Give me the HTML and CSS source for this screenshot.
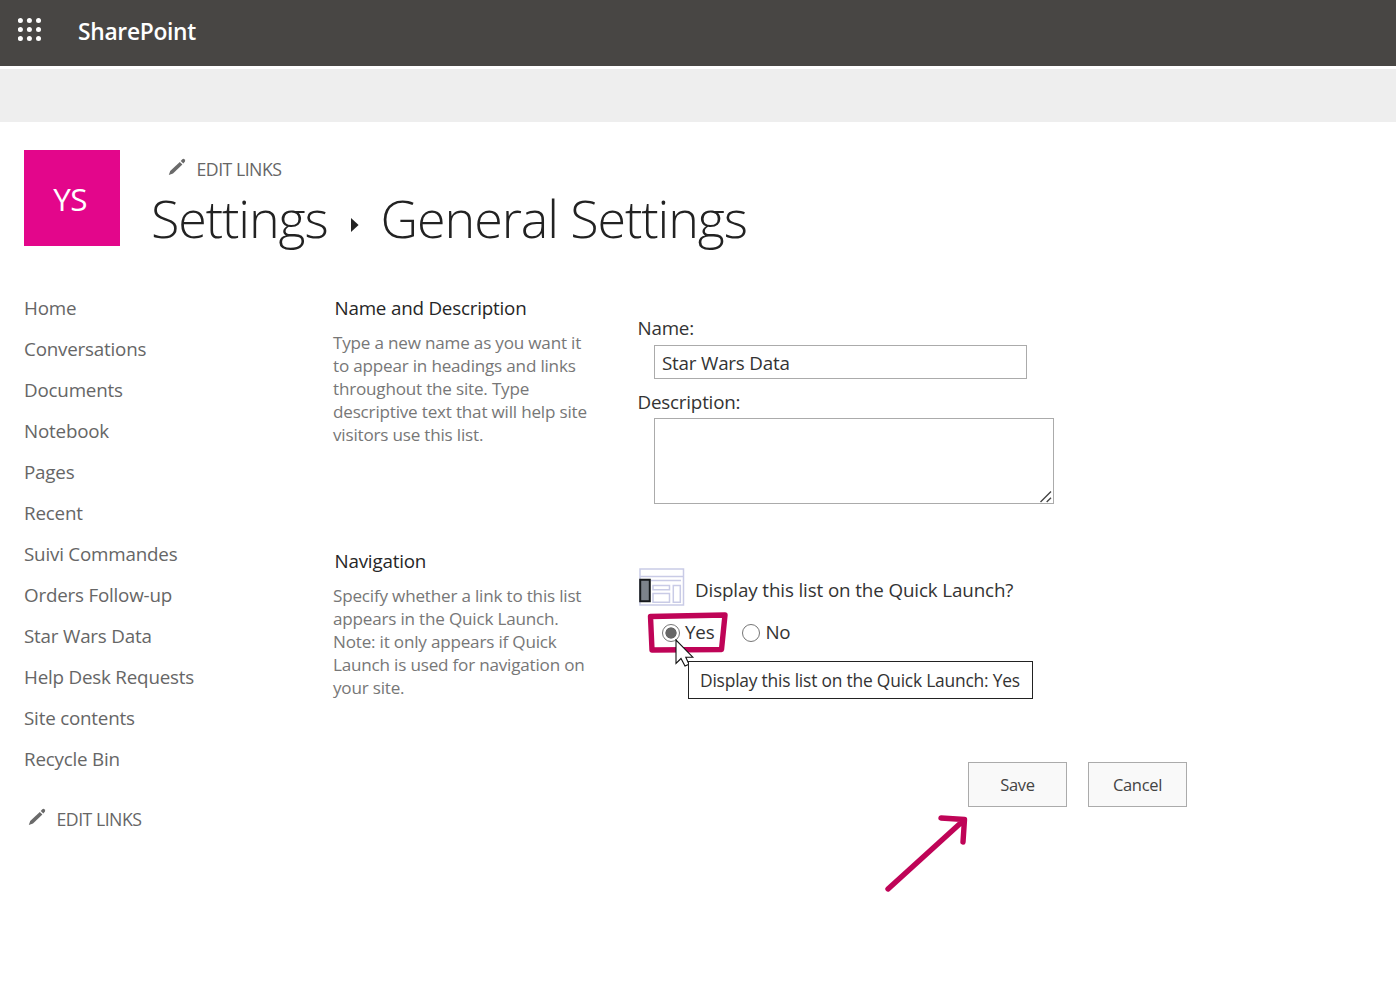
FILE: index.html
```html
<!DOCTYPE html>
<html lang="en">

<head>
	<title>General Settings</title>
	<meta charset="utf-8">
	<meta name="viewport" content="width=device-width, initial-scale=1.0">
	<link rel="stylesheet" href="styles.css">
</head>

<body>
	<header class="suite-bar">
		<svg class="waffle" width="24" height="24" viewBox="0 0 24 24" fill="#fff">
			<circle cx="2.4" cy="2.5" r="2.5"/><circle cx="11.4" cy="2.5" r="2.5"/><circle cx="20.5" cy="2.5" r="2.5"/>
			<circle cx="2.4" cy="11.5" r="2.5"/><circle cx="11.4" cy="11.5" r="2.5"/><circle cx="20.5" cy="11.5" r="2.5"/>
			<circle cx="2.4" cy="20.5" r="2.5"/><circle cx="11.4" cy="20.5" r="2.5"/><circle cx="20.5" cy="20.5" r="2.5"/>
		</svg>
		<span class="brand">SharePoint</span>
	</header>
	<div class="ribbon"></div>

	<div class="title-row">
		<div class="site-logo"><span>YS</span></div>
		<div class="title-box">
			<a class="edit-links">
				<svg class="pencil" width="18" height="18" viewBox="0 0 18 18" fill="#6a6a6a">
					<path d="M.8 17 2.2 13 11.8 3.900 14.4 6.500 5 15.400z"/>
					<path d="M12.700 3 14.300 1.300Q15.500.3 16.700 1.400 17.700 2.500 16.800 3.800L15.300 5.500z"/>
				</svg>
				<span>EDIT LINKS</span>
			</a>
			<h1 class="page-title">
				<span class="crumb">Settings</span>
				<svg class="crumb-arrow" width="8" height="14" viewBox="0 0 8 14"><path d="M0 0 7.6 7 0 14z" fill="#222"/></svg>
				<span class="current">General Settings</span>
			</h1>
		</div>
	</div>

	<div class="workspace">
		<nav class="side-nav">
			<ul>
				<li><a>Home</a></li>
				<li><a>Conversations</a></li>
				<li><a>Documents</a></li>
				<li><a>Notebook</a></li>
				<li><a>Pages</a></li>
				<li><a>Recent</a></li>
				<li><a>Suivi Commandes</a></li>
				<li><a>Orders Follow-up</a></li>
				<li><a>Star Wars Data</a></li>
				<li><a>Help Desk Requests</a></li>
				<li><a>Site contents</a></li>
				<li><a>Recycle Bin</a></li>
			</ul>
			<a class="edit-links">
				<svg class="pencil" width="18" height="18" viewBox="0 0 18 18" fill="#6a6a6a">
					<path d="M.8 17 2.2 13 11.8 3.900 14.4 6.500 5 15.400z"/>
					<path d="M12.700 3 14.300 1.300Q15.500.3 16.700 1.400 17.700 2.500 16.800 3.800L15.300 5.500z"/>
				</svg>
				<span>EDIT LINKS</span>
			</a>
		</nav>

		<form class="settings">
			<section class="setting name-setting">
				<div class="about">
					<h2>Name and Description</h2>
					<p>Type a new name as you want it<br>to appear in headings and links<br>throughout the site. Type<br>descriptive text that will help site<br>visitors use this list.</p>
				</div>
				<div class="fields">
					<label for="listName">Name:</label>
					<input class="text-input" id="listName" type="text" value="Star Wars Data">
					<label for="listDesc">Description:</label>
					<div class="area">
						<textarea id="listDesc"></textarea>
						<svg class="grip" width="12" height="12" viewBox="0 0 12 12" stroke="#444" stroke-width="1.4"><path d="M.5 11 11 .5M6.7 11 11 6.7"/></svg>
					</div>
				</div>
			</section>

			<section class="setting">
				<div class="about">
					<h2>Navigation</h2>
					<p>Specify whether a link to this list<br>appears in the Quick Launch.<br>Note: it only appears if Quick<br>Launch is used for navigation on<br>your site.</p>
				</div>
				<div class="fields launch">
					<div class="question">
						<svg width="46" height="38" viewBox="0 0 46 38" fill="#fff" stroke="#c9cbe6" stroke-width="1.5">
							<path d="M1 1h43.5v36H1z"/>
							<path d="M1 8.5h43.5M12 12.5h30" fill="none"/>
							<path d="M14 17.5h16.5v4.2H14zM14 25.5h16.5v8.7H14zM34.3 17.5h7v16.7h-7z"/>
							<path d="M1.2 11.7h9.6v21.6H1.2z" fill="#7d838c" stroke="#16191c" stroke-width="2"/>
						</svg>
						<span>Display this list on the Quick Launch?</span>
					</div>
					<div class="choices">
						<label><input type="radio" name="launch" checked><span>Yes</span></label>
						<label><input type="radio" name="launch"><span>No</span></label>
						<svg class="mark" width="82" height="42" viewBox="0 0 82 42" fill="none" stroke="#bf0457" stroke-width="5.4" stroke-linejoin="round"><path d="M3.5 4.500 78 3 74.5 37.500 5 38z"/></svg>
						<svg class="cursor" width="20" height="28" viewBox="0 0 20 28" fill="#fff" stroke="#111" stroke-width="1.1"><path d="M1 1V24.5L6 19.5 10 27 14 25.2 10.8 18.2H17.8z"/></svg>
						<div class="tooltip">Display this list on the Quick Launch: Yes</div>
					</div>
				</div>
			</section>

			<div class="actions">
				<button type="button">Save</button>
				<button type="button">Cancel</button>
				<svg class="pointer" width="86" height="80" viewBox="0 0 86 80" fill="none" stroke="#bf0457" stroke-width="5.4" stroke-linecap="round" stroke-linejoin="round"><path d="M4 75 80 6M57 4 80.5 5.5 79 28"/></svg>
			</div>
		</form>
	</div>
</body>

</html>
```
FILE: styles.css
```css
* {
	box-sizing: border-box;
}

body {
	margin: 0;
	height: 997px;
	overflow: hidden;
	background: #fff;
	color: #333;
	font-family: "Open Sans", "Noto Sans", sans-serif;
	font-size: 18.8px;
	line-height: 26px;
	letter-spacing: -0.2px;
}

h1, h2, p, ul {
	margin: 0;
	padding: 0;
	font-weight: normal;
}

.suite-bar {
	display: flex;
	height: 66px;
	padding: 18px 0 0 18px;
	background: #484644;
}

.brand {
	margin: 1px 0 0 36px;
	color: #fff;
	font-size: 22.8px;
	font-weight: 600;
	letter-spacing: -0.3px;
}

.ribbon {
	height: 53px;
	margin-top: 3px;
	background: #eee;
}

.title-row {
	display: flex;
	gap: 31px;
	height: 158px;
	padding: 28px 0 0 24px;
}

.site-logo {
	display: flex;
	align-items: center;
	justify-content: center;
	width: 96px;
	height: 96px;
	padding: 2px 4px 0 0;
	background: #e3068b;
	color: #fff;
	font-size: 31.5px;
	font-weight: 400;
	letter-spacing: -0.6px;
}

.edit-links {
	display: flex;
	gap: 11px;
	color: #666;
	font-size: 17.7px;
	letter-spacing: -0.5px;
}

.pencil {
	margin-top: 2px;
}

.title-box .edit-links {
	height: 33px;
	padding: 6px 0 0 16.5px;
}

.page-title {
	display: flex;
	color: #222;
	font-size: 52px;
	font-weight: 300;
	line-height: 70px;
	letter-spacing: -1.1px;
}

.crumb-arrow {
	margin: 35px 22px 0 23px;
}

.workspace {
	display: flex;
	padding-left: 24px;
}

.side-nav {
	width: 309px;
	padding-top: 8px;
	color: #666;
}

.side-nav ul {
	list-style: none;
}

.side-nav li {
	height: 41px;
	padding-top: 7px;
}

.side-nav .edit-links {
	padding: 26px 0 0 3.5px;
}

.settings {
	width: 860px;
	padding-top: 15px;
}

.setting {
	display: flex;
}

.name-setting {
	height: 253px;
}

.about {
	width: 305px;
}

.about h2 {
	padding-left: 1.5px;
	color: #262626;
	font-size: 18.8px;
}

.about p {
	padding-top: 10px;
	color: #777;
	font-size: 17.1px;
	line-height: 23px;
}

.fields {
	padding-top: 20px;
}

.fields > label {
	display: block;
	margin-left: -0.5px;
}

.text-input {
	display: block;
	width: 373px;
	height: 34px;
	margin: 4px 0 10px 16px;
	padding: 1px 7px 0;
	border: 1px solid #ababab;
	color: #333;
	font: inherit;
	letter-spacing: inherit;
}

.area {
	position: relative;
	width: 400px;
	height: 86px;
	margin: 3px 0 0 16px;
}

.area textarea {
	display: block;
	width: 100%;
	height: 100%;
	border: 1px solid #ababab;
	resize: none;
}

.grip {
	position: absolute;
	right: 2px;
	bottom: 1px;
}

.launch {
	padding-top: 20px;
}

.question {
	display: flex;
	gap: 10px;
	padding-left: 1px;
	letter-spacing: -0.12px;
}

.question span {
	padding-top: 9px;
}

.choices {
	display: flex;
	gap: 28px;
	position: relative;
	padding: 13px 0 0 24px;
}

.choices label {
	display: flex;
	align-items: center;
	gap: 5px;
}

.choices input {
	appearance: none;
	width: 18px;
	height: 18px;
	margin: 1px 0 0;
	border: 1px solid #767676;
	border-radius: 50%;
}

.choices input:checked {
	background: radial-gradient(circle, #666 5.3px, transparent 5.9px);
}

.mark {
	position: absolute;
	left: 9px;
	top: 6px;
}

.tooltip {
	position: absolute;
	left: 50px;
	top: 55px;
	width: 345px;
	height: 38px;
	padding: 5px 11px;
	border: 1px solid #222;
	background: #fff;
	font-size: 17.4px;
	white-space: nowrap;
}

.cursor {
	position: absolute;
	left: 37px;
	top: 33px;
}

.actions {
	display: flex;
	gap: 21px;
	position: relative;
	padding: 63px 0 0 635px;
}

.actions button {
	width: 99px;
	height: 45px;
	padding: 0;
	border: 1px solid #ababab;
	background: #f9f9f9;
	color: #444;
	font: inherit;
	font-size: 16.5px;
	letter-spacing: -0.3px;
}

.pointer {
	position: absolute;
	left: 551px;
	top: 115px;
}
```
